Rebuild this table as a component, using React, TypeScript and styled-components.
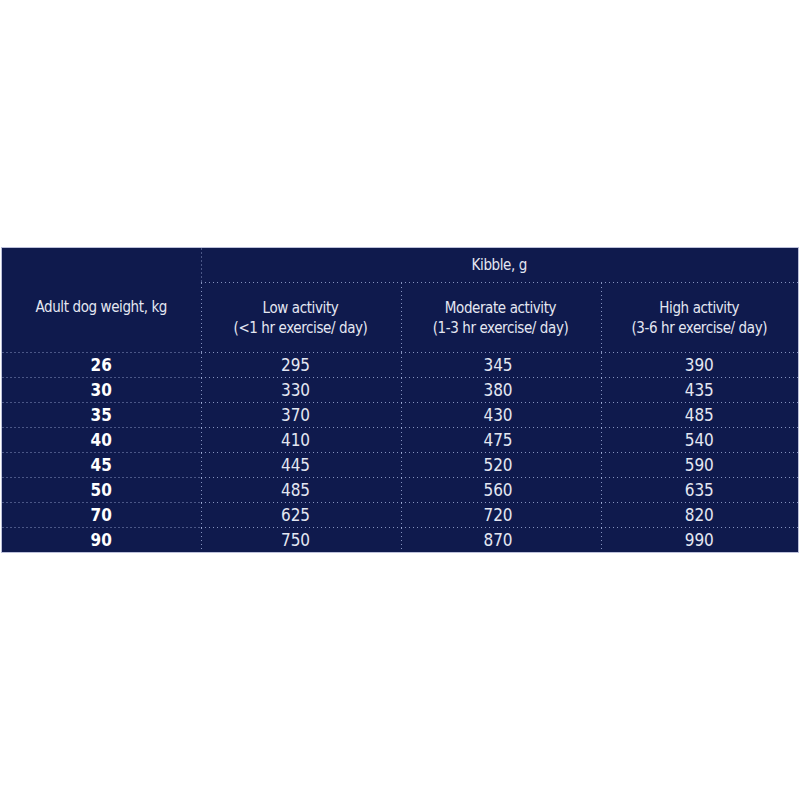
import React from "react";
import styled, { createGlobalStyle, css } from "styled-components";

const Global = createGlobalStyle`
  html, body { margin: 0; padding: 0; background: #ffffff; }
  body { font-family: "DejaVu Sans Condensed", "DejaVu Sans", sans-serif; }
`;

const Page = styled.div`
  width: 800px;
  height: 800px;
  padding: 247px 2px 0 1px;
  box-sizing: border-box;
`;

const Table = styled.table`
  width: 797px;
  border-collapse: collapse;
  background: #0f1a4d;
  border: 1px solid #bcc0da;
  color: #e4e7f2;
  font-size: 15px;
  letter-spacing: -0.4px;
  table-layout: fixed;
`;

const DOT = "rgba(185, 198, 240, 0.7)";

const lines = (left?: boolean, bottom?: boolean) => {
  const imgs: string[] = [];
  const sizes: string[] = [];
  const pos: string[] = [];
  const rep: string[] = [];
  if (left) {
    imgs.push(`linear-gradient(to bottom, ${DOT} 1px, transparent 1px)`);
    sizes.push("1px 4px");
    pos.push("left top");
    rep.push("repeat-y");
  }
  if (bottom) {
    imgs.push(`linear-gradient(to right, ${DOT} 1px, transparent 1px)`);
    sizes.push("4px 1px");
    pos.push("left bottom");
    rep.push("repeat-x");
  }
  if (!imgs.length) return css``;
  return css`
    background-image: ${imgs.join(", ")};
    background-size: ${sizes.join(", ")};
    background-position: ${pos.join(", ")};
    background-repeat: ${rep.join(", ")};
  `;
};

const Head = styled.th<{ $h: number; $left?: boolean; $bottom?: boolean; $pt?: number }>`
  height: ${(p) => p.$h}px;
  padding: ${(p) => p.$pt ?? 0}px 0 0 0;
  box-sizing: border-box;
  font-weight: normal;
  text-align: center;
  vertical-align: middle;
  line-height: 20px;
  ${(p) => lines(p.$left, p.$bottom)}
`;

const Cell = styled.td<{ $bold?: boolean; $left?: boolean; $last?: boolean; $shift?: number }>`
  height: 25px;
  box-sizing: border-box;
  padding: 0 ${(p) => p.$shift ?? 0}px 0 0;
  text-align: center;
  vertical-align: middle;
  line-height: 20px;
  font-weight: ${(p) => (p.$bold ? "bold" : "normal")};
  color: ${(p) => (p.$bold ? "#ffffff" : "#e4e7f2")};
  font-size: 17px;
  letter-spacing: 0;
  ${(p) => lines(p.$left, !p.$last)}
`;

const rows: [number, number, number, number][] = [
  [26, 295, 345, 390],
  [30, 330, 380, 435],
  [35, 370, 430, 485],
  [40, 410, 475, 540],
  [45, 445, 520, 590],
  [50, 485, 560, 635],
  [70, 625, 720, 820],
  [90, 750, 870, 990],
];

const shifts = [10, 5, 0];

export default function App() {
  return (
    <Page>
      <Global />
      <Table>
        <colgroup>
          <col style={{ width: 199 }} />
          <col style={{ width: 200 }} />
          <col style={{ width: 200 }} />
          <col style={{ width: 198 }} />
        </colgroup>
        <thead>
          <tr>
            <Head $h={35} rowSpan={2} $bottom $pt={14}>
              Adult dog weight, kg
            </Head>
            <Head $h={35} colSpan={3} $left $bottom>
              Kibble, g
            </Head>
          </tr>
          <tr>
            <Head $h={70} $left $bottom>
              Low activity
              <br />
              (&lt;1 hr exercise/ day)
            </Head>
            <Head $h={70} $left $bottom>
              Moderate activity
              <br />
              (1-3 hr exercise/ day)
            </Head>
            <Head $h={70} $left $bottom>
              High activity
              <br />
              (3-6 hr exercise/ day)
            </Head>
          </tr>
        </thead>
        <tbody>
          {rows.map((r, i) => (
            <tr key={r[0]}>
              <Cell $bold $last={i === rows.length - 1}>
                {r[0]}
              </Cell>
              {r.slice(1).map((v, j) => (
                <Cell key={j} $left $shift={shifts[j]} $last={i === rows.length - 1}>
                  {v}
                </Cell>
              ))}
            </tr>
          ))}
        </tbody>
      </Table>
    </Page>
  );
}
